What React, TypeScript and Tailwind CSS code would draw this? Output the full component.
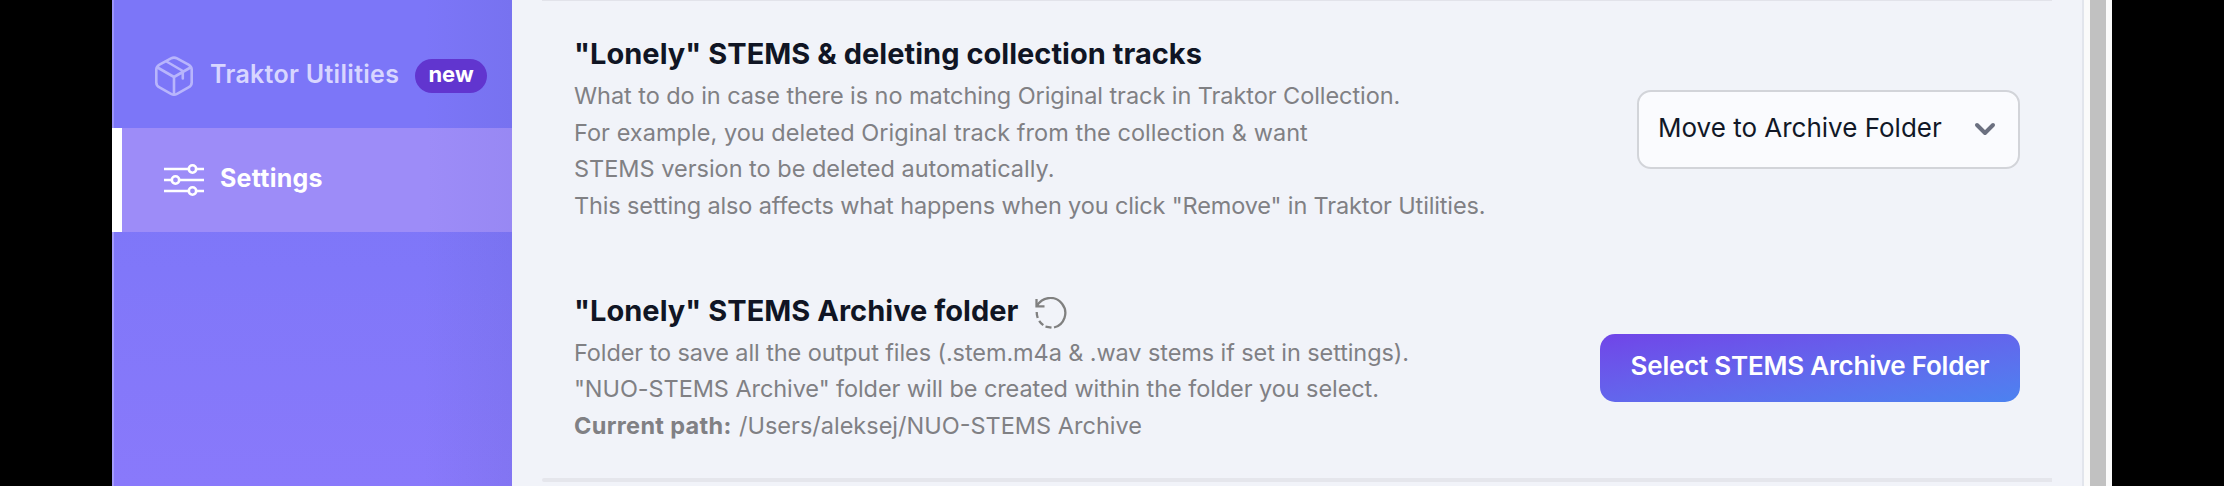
import type { ReactNode } from "react";

function BoxIcon() {
  return (
    <svg className="h-10 w-[38px] text-[#b8b5fc]" viewBox="0 0 38 40" fill="none" stroke="currentColor" strokeWidth="2.6" strokeLinejoin="round" strokeLinecap="round">
      <path d="M16 2.4Q19 .8 22 2.4L33.500 8.600Q36.700 10.500 36.700 13.600V26.400Q36.700 29.700 33.500 31.400L22 37.800Q19 39.400 16 37.800L4.500 31.400Q1.300 29.700 1.300 26.400V13.600Q1.300 10.500 4.500 8.600Z" />
      <path d="M2.500 11.500L19 21L35.500 11.500M19 21V38M11.500 5.500L27.800 15V22.500" />
    </svg>
  );
}

function SlidersIcon() {
  return (
    <svg className="h-8 w-10 text-white" viewBox="0 0 40 32" fill="none" stroke="currentColor" strokeWidth="2.6">
      <path d="M0 5H24.500M32.500 5H40M0 16H7.500M15.500 16H40M0 27H24.500M32.500 27H40" />
      <circle cx="28.500" cy="5" r="3.700" />
      <circle cx="11.500" cy="16" r="3.700" />
      <circle cx="28.500" cy="27" r="3.700" />
    </svg>
  );
}

function ResetIcon() {
  return (
    <svg className="mt-[4px] h-8 w-8 text-[#808080]" viewBox="0 0 32 32" fill="none" stroke="currentColor" strokeWidth="2.3">
      <path d="M1.500 2V9.300H9.500M2 9A15 15 0 1 1 19 30.500" />
      <path d="M1.700 15Q1.700 18 2.700 21M4.200 23.800Q5.800 26.300 8.300 28.200M10.500 29.600L16.500 30.600" />
    </svg>
  );
}

function Line({ className, children }: { className: string; children: ReactNode }) {
  return (
    <div className="flex whitespace-pre">
      <span className={className}>{children}</span>
    </div>
  );
}

export default function App() {
  return (
    <div className="flex h-[486px] w-[2224px] overflow-hidden bg-black pl-[112px] font-['Inter',sans-serif]">
      <aside className="h-full w-[400px] shrink-0 bg-[linear-gradient(to_right,transparent_78%,rgba(90,90,190,0.14)),linear-gradient(to_bottom,#7c76f8,#7c76f8_35%,#8979fb)]">
        <div className="flex h-[128px] items-start border-l-2 border-[#9c94fb] pl-[41px] pt-[56px]">
          <BoxIcon />
          <span className="ml-[17px] mt-[1px] w-[187px] whitespace-nowrap text-[25px] leading-[34px] font-semibold tracking-[0.3px] text-[#d8d6ff]">Traktor Utilities</span>
          <span className="ml-[18px] mt-[3px] flex h-[34px] w-[72px] justify-center rounded-full bg-[#6135cf] text-[22px] leading-[30px] font-bold text-white">new</span>
        </div>
        <div className="flex h-[104px] items-start border-l-10 border-white bg-[#9d8cf8] bg-[linear-gradient(to_right,transparent_78%,rgba(90,90,190,0.08))] pl-[42px] pt-[36px]">
          <SlidersIcon />
          <span className="ml-[16px] mt-[-4px] text-[25px] leading-[36px] font-bold tracking-[0.25px] text-white">Settings</span>
        </div>
        <div className="h-[254px] border-l-2 border-[#a49bfb]" />
      </aside>
      <main className="h-full w-[1572px] shrink-0 border-r-2 border-[#e2e5ec] bg-[#f1f3f9] pl-[30px]">
        <div className="h-px w-[1510px] bg-[#e2e3ea]" />
        <section className="flex h-[257px] w-[1478px] justify-between pl-[32px]">
          <div className="pt-[35px]">
            <h2 className="flex h-[42px] whitespace-nowrap text-[29px] leading-[36px] font-bold text-[#101524]">
              <span className="tracking-[0.03px]">"Lonely" STEMS &amp; deleting collection tracks</span>
            </h2>
            <div className="text-[23.5px] leading-[36.5px] text-[#808084]">
              <Line className="tracking-[-0.06px]">What to do in case there is no matching Original track in Traktor Collection.</Line>
              <Line className="tracking-[0.035px]">For example, you deleted Original track from the collection &amp; want</Line>
              <Line className="tracking-[-0.01px]">STEMS version to be deleted automatically.</Line>
              <Line className="tracking-[-0.14px]">This setting also affects what happens when you click "Remove" in Traktor Utilities.</Line>
            </div>
          </div>
          <button className="mt-[89px] flex h-[79px] w-[383px] justify-between rounded-[14px] border-2 border-[#d2d4d9] bg-[#fafbfe] pl-[19px] pr-[22px] text-[26px] leading-[71px] text-[#111827]">
            <span className="whitespace-nowrap">Move to Archive Folder</span>
            <svg className="mt-[29px] h-[16px] w-[22px]" viewBox="0 0 22 16" fill="none" stroke="#6b7080" strokeWidth="4" strokeLinecap="round" strokeLinejoin="round">
              <path d="M3 4L11 12L19 4" />
            </svg>
          </button>
        </section>
        <section className="flex h-[220px] w-[1478px] justify-between pl-[32px]">
          <div className="pt-[35px]">
            <h2 className="flex h-[42px] items-start whitespace-nowrap text-[29px] leading-[36px] font-bold text-[#101524]">
              <span className="w-[461px] tracking-[0.03px]">"Lonely" STEMS Archive folder</span>
              <ResetIcon />
            </h2>
            <div className="text-[23.5px] leading-[36.4px] text-[#808084]">
              <Line className="tracking-[-0.095px]">Folder to save all the output files (.stem.m4a &amp; .wav stems if set in settings).</Line>
              <Line className="tracking-[-0.075px]">"NUO-STEMS Archive" folder will be created within the folder you select.</Line>
              <div className="flex">
                <b className="w-[165px] whitespace-nowrap tracking-[0.33px]">Current path:</b>
                <span className="whitespace-nowrap">/Users/aleksej/NUO-STEMS Archive</span>
              </div>
            </div>
          </div>
          <button className="mt-[76px] h-[68px] w-[420px] rounded-[15px] bg-linear-to-br from-[#7044e8] to-[#4b82f0] pb-[5px] text-[26px] leading-[60px] font-semibold tracking-[-0.22px] whitespace-nowrap text-white">
            Select STEMS Archive Folder
          </button>
        </section>
        <div className="h-1 w-[1510px] rounded-l-sm bg-[#e5e6ec]" />
      </main>
      <div className="h-full w-7 shrink-0 bg-[#fafafa] px-[6px]">
        <div className="h-full w-4 bg-[#c1c1c1]" />
      </div>
    </div>
  );
}
